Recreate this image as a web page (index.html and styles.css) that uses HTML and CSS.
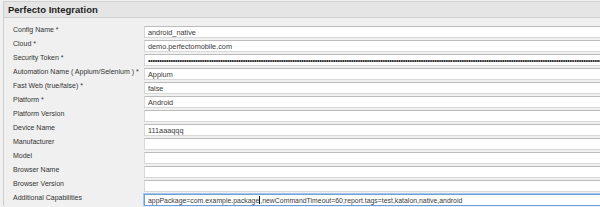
FILE: index.html
```html
<!DOCTYPE html>
<html>
<head>
<meta charset="utf-8">
<link rel="stylesheet" href="styles.css">
</head>
<body>
<div class="panel">
  <div class="panel-header">Perfecto Integration</div>
  <div class="panel-body">
    <div class="row"><label class="lbl">Config Name *</label><input class="field" type="text" value="android_native"></div>
    <div class="row"><label class="lbl">Cloud *</label><input class="field" type="text" value="demo.perfectomobile.com"></div>
    <div class="row"><label class="lbl">Security Token *</label><input class="field secret" type="password" value="abcdefghijabcdefghijabcdefghijabcdefghijabcdefghijabcdefghijabcdefghijabcdefghijabcdefghijabcdefghijabcdefghijabcdefghijabcdefghijabcdefghijabcdefghijabcdefghijabcdefghijabcdefghijabcdefghijabcdefghijabcdefghijabcdefghij"></div>
    <div class="row"><label class="lbl">Automation Name ( Appium/Selenium ) *</label><input class="field" type="text" value="Appium"></div>
    <div class="row"><label class="lbl">Fast Web (true/false) *</label><input class="field" type="text" value="false"></div>
    <div class="row"><label class="lbl">Platform *</label><input class="field" type="text" value="Android"></div>
    <div class="row"><label class="lbl">Platform Version</label><input class="field" type="text" value=""></div>
    <div class="row"><label class="lbl">Device Name</label><input class="field" type="text" value="111aaaqqq"></div>
    <div class="row"><label class="lbl">Manufacturer</label><input class="field" type="text" value=""></div>
    <div class="row"><label class="lbl">Model</label><input class="field" type="text" value=""></div>
    <div class="row"><label class="lbl">Browser Name</label><input class="field" type="text" value=""></div>
    <div class="row"><label class="lbl">Browser Version</label><input class="field" type="text" value=""></div>
    <div class="row"><label class="lbl">Additional Capabilities</label><div class="field focused">appPackage=com.example.package<span class="caret"></span>,newCommandTimeout=60;report.tags=test,katalon,native,android</div></div>
  </div>
</div>
</body>
</html>
```
FILE: styles.css
```css
html, body {
  margin: 0;
  padding: 0;
  overflow: hidden;
  background: #f0f0f0;
  font-family: "Liberation Sans", Arial, sans-serif;
}

.panel {
  margin: 1px 0 0 3px;
  width: 620px;
  border-top: 1px solid #d2d2d2;
  border-left: 1px solid #cdcdcd;
}

.panel-header {
  height: 15px;
  line-height: 15px;
  padding-left: 4px;
  background: #e5e5e5;
  border-bottom: 1px solid #cfcfcf;
  font-size: 9.5px;
  font-weight: bold;
  color: #1e1e1e;
}

.panel-body {
  display: flex;
  flex-direction: column;
  gap: 2px;
  padding: 8px 0 0 9px;
}

.row {
  display: flex;
  align-items: center;
  height: 12px;
}

.lbl {
  flex: 0 0 131px;
  font-size: 7px;
  line-height: 8px;
  color: #333;
  margin-bottom: 4px;
  white-space: nowrap;
}

.field {
  flex: 1;
  box-sizing: border-box;
  height: 12px;
  margin: 0;
  padding: 0 3px;
  border: 1px solid #d8d8d8;
  border-top-color: #bcbcbc;
  border-radius: 0;
  background: #fff;
  font-family: "Liberation Sans", Arial, sans-serif;
  font-size: 7.3px;
  line-height: 9px;
  color: #3a3a3a;
  outline: none;
}

.secret {
  color: #222;
  letter-spacing: -0.3px;
}

.focused {
  display: flex;
  align-items: center;
  white-space: nowrap;
  overflow: hidden;
  font-size: 6.9px;
  border: 1px solid #6d9fdb;
  box-shadow: 0 0 0 1px #a6c6ee;
}

.caret {
  display: inline-block;
  width: 0;
  height: 8px;
  border-left: 1px solid #111;
}
```
